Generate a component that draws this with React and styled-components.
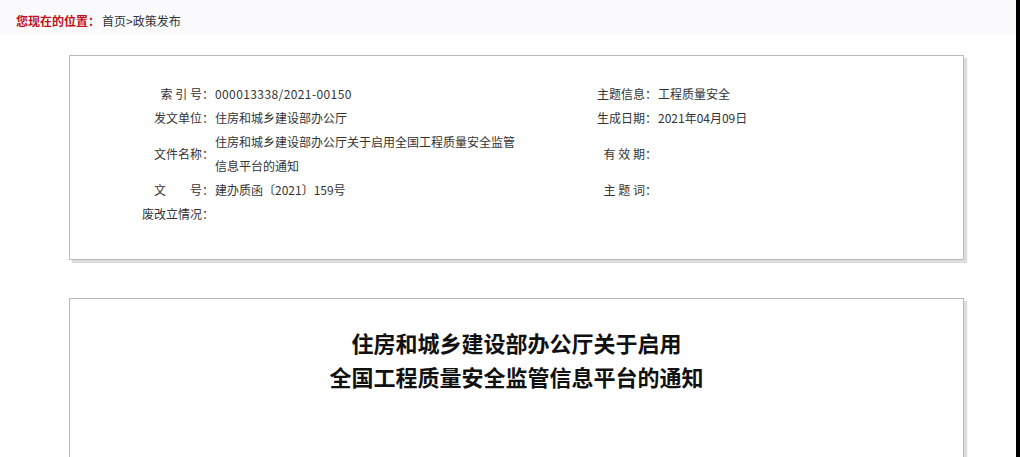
import styled, { createGlobalStyle } from 'styled-components';

const GlobalStyle = createGlobalStyle`
	html, body {
		margin: 0;
		padding: 0;
		background: #fff;
		overflow: hidden;
	}
	body {
		font-family: "Noto Sans CJK SC", "Noto Sans", sans-serif;
		color: #333;
	}
`;

const Page = styled.div`
	height: 100vh;
	border-right: 4px solid #000;
	box-sizing: border-box;
	overflow: hidden;
`;

const TopBar = styled.div`
	height: 34px;
	background: #fafafd;
	display: flex;
	align-items: center;
	padding-left: 16px;
	padding-top: 6px;
	box-sizing: border-box;
	font-size: 12px;
`;

const Here = styled.span`
	color: #c0111b;
	font-weight: bold;
`;

const Crumbs = styled.span`
	color: #333;
	margin-left: 2px;
`;

const Card = styled.div`
	width: 895px;
	margin: ${(props) => props.$top}px 0 0 69px;
	border: 1px solid #bbb;
	box-sizing: border-box;
	background: #fff;
	box-shadow: 3px 3px 1px #dcdcdc;
	padding: ${(props) => props.$pad};
	min-height: ${(props) => props.$minh || 0}px;
`;

const Meta = styled.div`
	display: grid;
	grid-template-columns: 72px 310px 133px 1fr;
	grid-auto-rows: minmax(24px, auto);
	font-size: 12px;
	line-height: 24px;
	color: #333;
`;

const Label = styled.div`
	text-align: right;
	white-space: pre;
	align-self: center;
`;

const Value = styled.div`
	padding-left: 1px;
	align-self: center;
	letter-spacing: ${(props) => (props.$num ? '0.4px' : '0')};
`;

const Title = styled.h1`
	margin: 0;
	text-align: center;
	font-size: 22px;
	line-height: 34px;
	font-weight: bold;
	color: #111;
`;

const rows = [
	['索 引 号：', '000013338/2021-00150', '主题信息：', '工程质量安全'],
	['发文单位：', '住房和城乡建设部办公厅', '生成日期：', '2021年04月09日'],
	['文件名称：', '住房和城乡建设部办公厅关于启用全国工程质量安全监管信息平台的通知', '有 效 期：', ''],
	['文\u3000\u3000号：', '建办质函〔2021〕159号', '主 题 词：', ''],
	['废改立情况：', '', '', ''],
];

export default function App() {
	return (
		<Page>
			<GlobalStyle />
			<TopBar>
				<Here>您现在的位置：</Here>
				<Crumbs>首页&gt;政策发布</Crumbs>
			</TopBar>
			<Card $top={21} $pad="26px 0 33px 72px">
				<Meta>
					{rows.map((r, i) => [
						<Label key={'a' + i}>{r[0]}</Label>,
						<Value key={'b' + i} $num={i === 0}>{r[1]}</Value>,
						<Label key={'c' + i}>{r[2]}</Label>,
						<Value key={'d' + i}>{r[3]}</Value>,
					])}
				</Meta>
			</Card>
			<Card $top={38} $pad="26px 0 0 0" $minh={200}>
				<Title>
					住房和城乡建设部办公厅关于启用
					<br />
					全国工程质量安全监管信息平台的通知
				</Title>
			</Card>
		</Page>
	);
}
